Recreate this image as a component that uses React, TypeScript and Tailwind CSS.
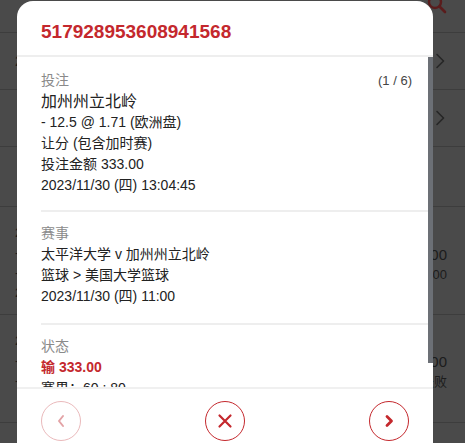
import React from "react";

const font = { fontFamily: '"Liberation Sans", Arial, "Noto Sans CJK SC", sans-serif' };

function BgChevron() {
  return (
    <svg width="10" height="16" viewBox="0 0 10 16" fill="none">
      <path d="M2 1.5 L8.5 8 L2 14.5" stroke="#262626" strokeWidth="1.6" strokeLinecap="round" strokeLinejoin="round" />
    </svg>
  );
}

function Background() {
  return (
    <div className="w-full h-[443px] bg-[#4a4a4a] overflow-hidden flex flex-col text-[#1c1c1c]">
      <div className="h-[33px] border-b border-[#3d3d3d] flex justify-end items-start pr-[18px] shrink-0">
        <svg width="20" height="20" viewBox="0 0 20 20" className="-mt-[6px]" fill="none">
          <circle cx="8" cy="8" r="6" stroke="#5a1c1c" strokeWidth="2.4" />
          <path d="M12.5 12.5 L18 18" stroke="#5a1c1c" strokeWidth="2.6" strokeLinecap="round" />
        </svg>
      </div>
      <div className="h-[57px] border-b border-[#3d3d3d] flex justify-between items-center pl-[15px] pr-[20px] shrink-0">
        <span className="text-[14px]">2</span>
        <BgChevron />
      </div>
      <div className="h-[57px] border-b border-[#3d3d3d] flex justify-end items-center pr-[20px] shrink-0">
        <BgChevron />
      </div>
      <div className="h-[60px] border-b border-[#3d3d3d] shrink-0" />
      <div className="h-[108px] border-b border-[#3d3d3d] flex justify-between pl-[15px] pr-[18px] pt-[16px] shrink-0">
        <div className="flex flex-col text-[13px] leading-[20px]">
          <span>2</span>
          <span>-</span>
          <span>-</span>
          <span>2</span>
        </div>
        <div className="flex flex-col items-end pt-[22px]">
          <span className="text-[15px] leading-[20px]">00</span>
          <span className="text-[13px] leading-[20px]">.00</span>
        </div>
      </div>
      <div className="h-[108px] border-b border-[#3d3d3d] flex justify-between pl-[15px] pr-[18px] pt-[16px] shrink-0">
        <div className="flex flex-col text-[13px] leading-[20px]">
          <span>2</span>
          <span>-</span>
          <span>-</span>
        </div>
        <div className="flex flex-col items-end pt-[21px]">
          <span className="text-[15px] leading-[20px]">00</span>
          <span className="text-[13px] leading-[20px]">失败</span>
        </div>
      </div>
      <div className="flex-1" />
    </div>
  );
}

function Section({ children, last, first }: { children: React.ReactNode; last?: boolean; first?: boolean }) {
  return (
    <div
      className={
        "ml-6 pr-4 " +
        (first ? "pt-[13px] pb-[14px] " : "pt-[11px] pb-4 ") +
        (last ? "" : "border-b-2 border-[#eeeeee]")
      }
    >
      {children}
    </div>
  );
}

export default function App() {
  return (
    <div className="relative w-[465px] h-[443px] overflow-hidden" style={font}>
      <Background />
      <div className="absolute left-[17px] top-[1px] w-[416px] h-[470px] bg-white rounded-[16px] flex flex-col overflow-hidden">
        <div className="h-[56px] border-b-2 border-[#eeeeee] px-6 flex items-center shrink-0">
          <span className="text-[19px] font-bold text-[#c4282d] pt-[8px]">517928953608941568</span>
        </div>
        <div className="h-[330px] flex shrink-0 overflow-hidden">
          <div className="flex-1 text-[14px] leading-[21px] text-[#222]">
            <Section first>
              <div className="flex justify-between">
                <span className="text-[#8a8a8a]">投注</span>
                <span className="text-[13px] text-[#444]">(1 / 6)</span>
              </div>
              <div className="text-[16px]">加州州立北岭</div>
              <div>- 12.5 @ 1.71 (欧洲盘)</div>
              <div>让分 (包含加时赛)</div>
              <div>投注金额 333.00</div>
              <div>2023/11/30 (四) 13:04:45</div>
            </Section>
            <Section>
              <div className="text-[#8a8a8a]">赛事</div>
              <div>太平洋大学 v 加州州立北岭</div>
              <div>篮球 &gt; 美国大学篮球</div>
              <div>2023/11/30 (四) 11:00</div>
            </Section>
            <Section last>
              <div className="text-[#8a8a8a]">状态</div>
              <div className="font-bold text-[#c4282d]">输 333.00</div>
              <div>赛果：60 : 80</div>
            </Section>
          </div>
          <div className="w-[5px] flex flex-col">
            <div className="h-[306px] bg-[#6c7076]" />
          </div>
        </div>
        <div className="border-t-2 border-[#f0f0f0] px-6 pt-[12px] flex justify-between">
          <button className="w-10 h-10 rounded-full border border-[#eab9bb] flex items-center justify-center">
            <svg width="10" height="14" viewBox="0 0 10 14" fill="none">
              <path d="M7 2 L3 7 L7 12" stroke="#e3a3a6" strokeWidth="2" strokeLinecap="round" strokeLinejoin="round" />
            </svg>
          </button>
          <button className="w-10 h-10 rounded-full border border-[#c4282d] flex items-center justify-center">
            <svg width="16" height="16" viewBox="0 0 16 16" fill="none">
              <path d="M2.5 2.5 L13.5 13.5 M13.5 2.5 L2.5 13.5" stroke="#c4282d" strokeWidth="2.2" strokeLinecap="round" />
            </svg>
          </button>
          <button className="w-10 h-10 rounded-full border border-[#c4282d] flex items-center justify-center">
            <svg width="10" height="14" viewBox="0 0 10 14" fill="none">
              <path d="M3 2.5 L7.5 7 L3 11.5" stroke="#c4282d" strokeWidth="2.8" strokeLinecap="round" strokeLinejoin="round" />
            </svg>
          </button>
        </div>
      </div>
    </div>
  );
}
